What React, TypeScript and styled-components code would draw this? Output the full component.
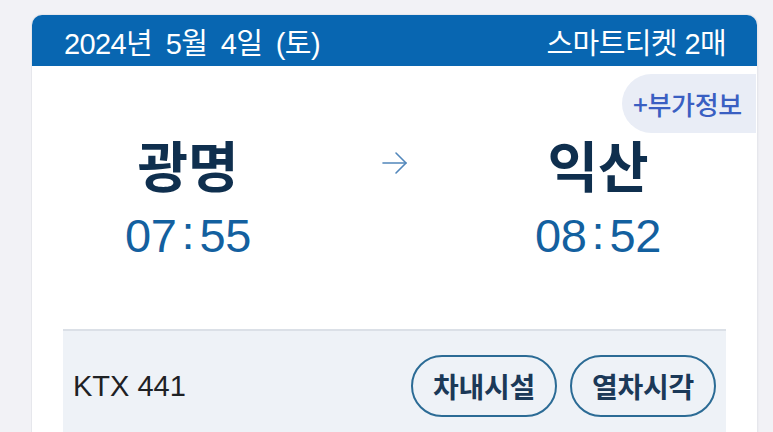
import React from "react";
import styled, { createGlobalStyle } from "styled-components";

const Global = createGlobalStyle`
  html, body { margin: 0; padding: 0; background: #f2f2f6; }
  body { font-family: "Liberation Sans", "Noto Sans CJK KR", sans-serif; }
  * { box-sizing: border-box; }
`;

const Page = styled.div`
  padding: 15px 16px 0 32px;
  height: 432px;
  overflow: hidden;
`;

const Card = styled.div`
  background: #ffffff;
  border-radius: 10px 10px 0 0;
  box-shadow: 0 0 0 1px #e6e7ec, 1px 0 2px #dfe0e6;
  overflow: hidden;
  height: 460px;
`;

const Header = styled.div`
  height: 51px;
  background: #0866b1;
  color: #ffffff;
  display: flex;
  align-items: center;
  justify-content: space-between;
  padding: 0 31px 0 32px;
  font-size: 29px;
  letter-spacing: -0.6px;
`;

const HeaderDate = styled.span`
  word-spacing: 6px;
`;

const Body = styled.div`
  position: relative;
  padding: 0 31px 0 31px;
`;

const InfoPill = styled.div`
  position: absolute;
  top: 8px;
  right: 1px;
  height: 59px;
  padding: 0 14px 0 11px;
  display: flex;
  align-items: center;
  background: #e9edf6;
  border-radius: 30px 0 0 30px;
  color: #3a5fc2;
  font-family: "Noto Sans CJK KR", sans-serif;
  font-size: 26px;
  font-weight: 500;
  letter-spacing: -0.3px;
`;

const Route = styled.div`
  display: grid;
  grid-template-columns: 250px 160px 250px;
  padding: 67px 0 66px 0;
`;

const Stop = styled.div`
  display: flex;
  flex-direction: column;
  align-items: center;
  gap: 16px;
`;

const StationName = styled.div`
  font-family: "Noto Sans CJK KR", sans-serif;
  font-weight: 700;
  font-size: 55px;
  line-height: 60px;
  color: #0f2f4e;
`;

const Time = styled.div`
  font-size: 47px;
  line-height: 54px;
  color: #13609f;
  letter-spacing: -0.3px;
`;

const Colon = styled.span`
  margin: 0 5px;
  position: relative;
  top: -3px;
`;

const ArrowCell = styled.div`
  display: flex;
  justify-content: center;
  padding-top: 18px;
  padding-left: 4px;
  color: #5287bb;
`;

const Train = styled.div`
  background: #eef2f7;
  border-top: 2px solid #dbe0e7;
  padding: 24px 10px 40px 10px;
  display: flex;
  align-items: center;
  justify-content: space-between;
`;

const TrainName = styled.div`
  font-size: 29px;
  color: #1e2124;
  letter-spacing: 0;
`;

const Buttons = styled.div`
  display: flex;
  gap: 13px;
`;

const PillButton = styled.button`
  height: 62px;
  width: 146px;
  border: 2px solid #2b6b95;
  border-radius: 31px;
  background: transparent;
  color: #1b3958;
  font-family: "Noto Sans CJK KR", sans-serif;
  font-weight: 700;
  font-size: 28px;
  padding: 0;
  letter-spacing: -0.2px;
`;

const Arrow = () => (
  <svg width="28" height="24" viewBox="0 0 28 24" fill="none" stroke="currentColor" strokeWidth="1.6" strokeLinecap="round" strokeLinejoin="round">
    <line x1="2" y1="12" x2="25" y2="12" />
    <polyline points="15,2 25,12 15,22" />
  </svg>
);

const TimeText = ({ h, m }: { h: string; m: string }) => (
  <Time>
    {h}
    <Colon>:</Colon>
    {m}
  </Time>
);

export default function App() {
  return (
    <>
      <Global />
      <Page>
        <Card>
          <Header>
            <HeaderDate>2024년 5월 4일 (토)</HeaderDate>
            <span>스마트티켓 2매</span>
          </Header>
          <Body>
            <InfoPill>+부가정보</InfoPill>
            <Route>
              <Stop>
                <StationName>광명</StationName>
                <TimeText h="07" m="55" />
              </Stop>
              <ArrowCell>
                <Arrow />
              </ArrowCell>
              <Stop>
                <StationName>익산</StationName>
                <TimeText h="08" m="52" />
              </Stop>
            </Route>
            <Train>
              <TrainName>KTX 441</TrainName>
              <Buttons>
                <PillButton>차내시설</PillButton>
                <PillButton>열차시각</PillButton>
              </Buttons>
            </Train>
          </Body>
        </Card>
      </Page>
    </>
  );
}
